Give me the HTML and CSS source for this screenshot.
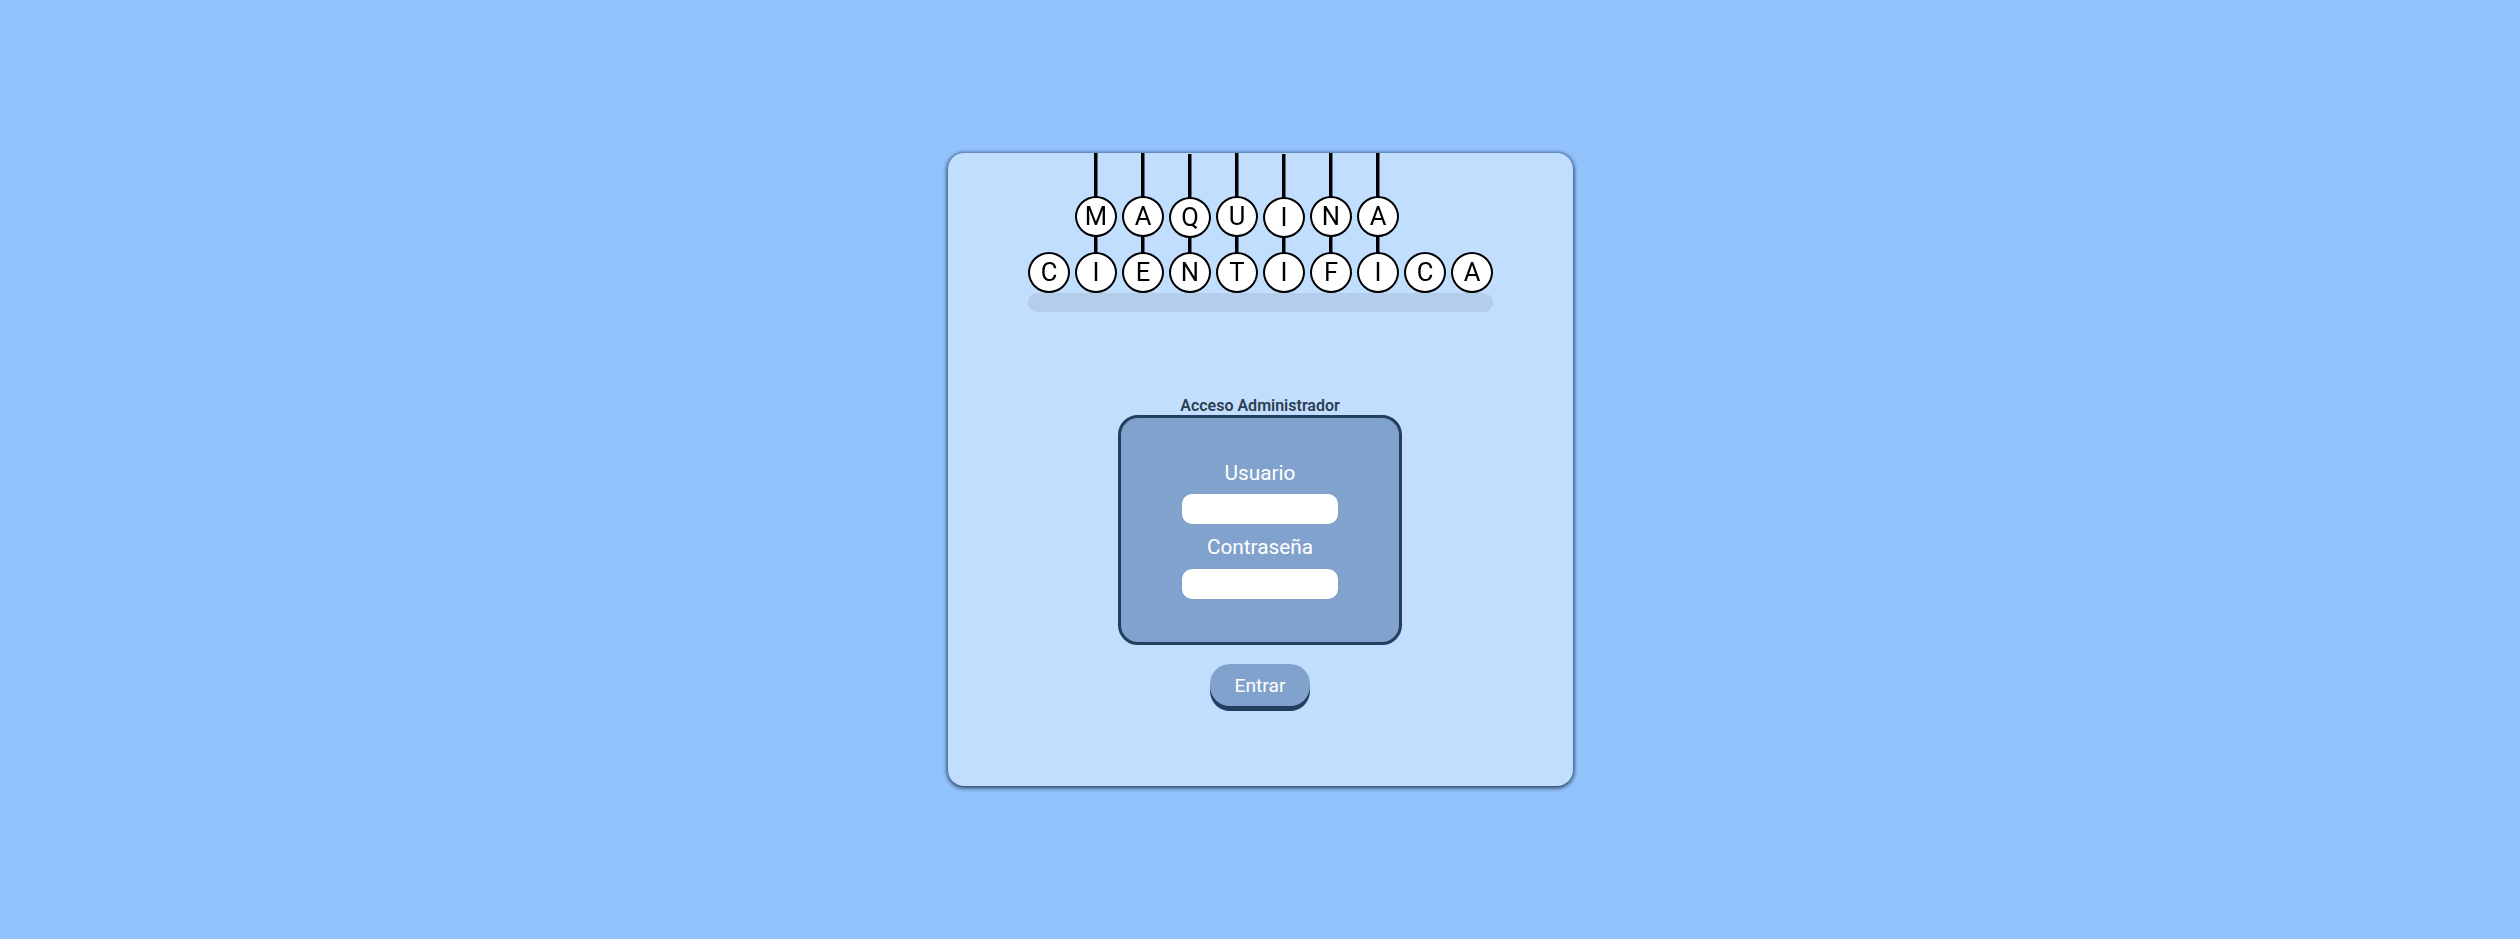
FILE: index.html
```html
<!DOCTYPE html>
<html lang="es">
<head>
<meta charset="utf-8">
<title>Máquina Científica</title>
<link rel="stylesheet" href="styles.css">
</head>
<body>
<main class="card">
  <div class="logo">
    <div class="row hanging">
      <span class="bead">M</span><span class="bead">A</span><span class="bead low">Q</span><span class="bead">U</span><span class="bead low">I</span><span class="bead">N</span><span class="bead">A</span>
    </div>
    <div class="row">
      <span class="bead">C</span><span class="bead">I</span><span class="bead">E</span><span class="bead">N</span><span class="bead">T</span><span class="bead">I</span><span class="bead">F</span><span class="bead">I</span><span class="bead">C</span><span class="bead">A</span>
    </div>
    <div class="base"></div>
  </div>
  <form class="login">
    <h1 class="title">Acceso Administrador</h1>
    <div class="fields">
      <label class="label" for="user">Usuario</label>
      <input class="input" id="user" type="text">
      <label class="label second" for="pass">Contraseña</label>
      <input class="input" id="pass" type="password">
    </div>
    <button class="submit" type="button">Entrar</button>
  </form>
</main>
</body>
</html>
```
FILE: styles.css
```css
* { box-sizing: border-box; }

body {
  margin: 0;
  height: 939px;
  padding: 153px 0 0 948px;
  background: #93c3fd;
  font-family: Roboto, sans-serif;
}

.card {
  width: 625px;
  height: 633px;
  border-radius: 16px;
  background: #c1deff;
  box-shadow: 0 1px 4px 1px #243f5e;
}

.logo {
  width: 465px;
  margin-left: 80px;
}

.row {
  display: flex;
  gap: 5px;
}

.hanging {
  height: 99px;
  padding: 43px 0 0 47px;
}

.bead {
  position: relative;
  width: 42px;
  height: 41px;
  border: 2px solid #000;
  border-radius: 50%;
  background: #fff;
  color: #000;
  font-size: 25.6px;
  line-height: 37px;
  text-align: center;
  will-change: transform;
}

/* rope above and below each hanging bead */
.hanging .bead::before,
.hanging .bead::after {
  content: "";
  position: absolute;
  left: 17px;
  width: 4px;
  background: linear-gradient(to right, #000 3px, rgba(0, 0, 0, 0.5) 3px);
}

.hanging .bead::before { bottom: 38px; height: 44px; }
.hanging .bead::after { top: 38px; height: 17px; }
.hanging .low { top: 1px; }

.base {
  height: 19px;
  border-radius: 10px;
  background: #b3cdea;
}

.login {
  width: 284px;
  margin: 84px 0 0 170px;
  display: flex;
  flex-direction: column;
  align-items: center;
}

.title {
  margin: 0;
  font-size: 16px;
  line-height: 19px;
  font-weight: 600;
  color: #2c3e50;
}

.fields {
  width: 284px;
  height: 230px;
  padding-top: 43px;
  border: 3px solid #243f5e;
  border-radius: 20px;
  background: #80a2cd;
  display: flex;
  flex-direction: column;
  align-items: center;
}

.label {
  font-size: 20.8px;
  line-height: 24px;
  margin-bottom: 9px;
  color: #fff;
}

.second { margin: 11px 0 10px; }

.input {
  width: 156px;
  height: 30px;
  padding: 0 8px;
  border: 0;
  border-radius: 10px;
  background: #fff;
}

.submit {
  width: 100px;
  height: 42px;
  margin-top: 19px;
  padding: 0;
  border: 0;
  border-radius: 20px;
  background: #80a2cd;
  box-shadow: 0 5px 0 #243f5e;
  color: #fff;
  font-family: inherit;
  font-size: 19.2px;
}
```
